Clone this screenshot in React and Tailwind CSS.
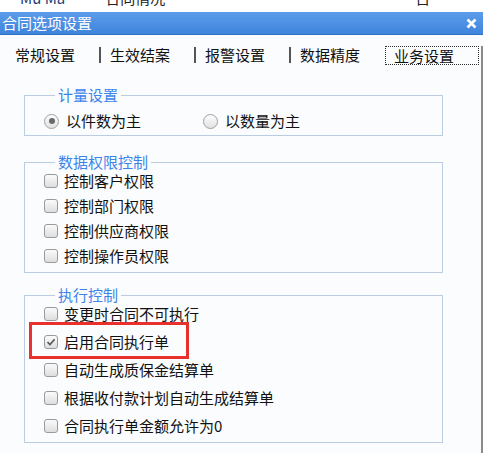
import React from "react";

const font = { fontFamily: '"Noto Sans CJK SC", "Noto Sans", sans-serif' };

function Check({ checked }) {
  return (
    <span className="flex h-[14px] w-[14px] shrink-0 items-center justify-center rounded-[3px] border border-[#9a9a9a] bg-gradient-to-b from-[#fbfbfb] to-[#dedede]">
      {checked && (
        <svg width="10" height="10" viewBox="0 0 10 10">
          <path d="M1.5 5.2 L4 7.6 L8.6 2.2" fill="none" stroke="#555" strokeWidth="1.6" />
        </svg>
      )}
    </span>
  );
}

function Radio({ checked }) {
  return (
    <span className="flex h-[15px] w-[15px] shrink-0 items-center justify-center rounded-full border border-[#a0a0a0] bg-gradient-to-b from-[#fdfdfd] to-[#e2e2e2]">
      {checked && <span className="h-[6px] w-[6px] rounded-full bg-[#6a6a6a]" />}
    </span>
  );
}

function Row({ checked, children, boxed }) {
  return (
    <div className="relative flex h-[20px] items-center gap-[6px]">
      {boxed && (
        <span className="absolute left-[-15px] top-[-10px] h-[37px] w-[160px] border-[3px] border-[#e8302c]" />
      )}
      <Check checked={checked} />
      <span className="whitespace-nowrap text-[15px] leading-[20px] text-[#111]">{children}</span>
    </div>
  );
}

function Group({ title, children, className }) {
  return (
    <fieldset className={`ml-[24px] w-[419px] border border-[#bccde2] pl-[19px] ${className}`}>
      <legend className="ml-[11px] px-[3px] text-[15px] leading-[18px] text-[#3d84ea]">{title}</legend>
      {children}
    </fieldset>
  );
}

const tabs = ["常规设置", "生效结案", "报警设置", "数据精度"];

export default function App() {
  return (
    <div className="h-[453px] w-[483px] overflow-hidden bg-[#fafcfe]" style={font}>
      <div className="h-[12px] overflow-hidden bg-white">
        <div className="mt-[-11px] flex whitespace-nowrap text-[15px] leading-[18px] text-[#1f3d7a]">
          <span className="ml-[20px]">Mu Ma</span>
          <span className="ml-[40px] text-[#222]">合同情况</span>
          <span className="ml-[250px] text-[#222]">日</span>
        </div>
      </div>
      <div className="flex h-[23px] items-center justify-between border-b border-[#2f6fc4] bg-gradient-to-b from-[#5c9cea] to-[#3f84dc] pl-[2px] pr-[6px]">
        <span className="text-[15px] leading-[20px] text-white">合同选项设置</span>
        <svg width="11" height="11" viewBox="0 0 11 11">
          <path d="M1.5 1.5 L9.5 9.5 M9.5 1.5 L1.5 9.5" stroke="white" strokeWidth="2.6" />
        </svg>
      </div>
      <div className="flex">
        <div className="w-[481px]">
          <div className="mt-[10px] flex h-[20px] items-center whitespace-nowrap pl-[15px] text-[15px] text-[#111]">
            {tabs.map((t, i) => (
              <React.Fragment key={t}>
                {i > 0 && <span className="ml-[24px] mr-[9px] h-[16px] w-[2px] shrink-0 bg-[#555]" />}
                <span className="w-[60px] shrink-0 leading-[20px]">{t}</span>
              </React.Fragment>
            ))}
            <span className="ml-[25px] flex h-[19px] w-[94px] shrink-0 items-center border border-dotted border-[#333] pl-[8px] leading-[17px]">
              业务设置
            </span>
          </div>
          <Group title="计量设置" className="mt-[21px] pb-[4px]">
            <div className="mt-[7px] flex h-[20px] items-center whitespace-nowrap">
              <Radio checked />
              <span className="ml-[7px] text-[15px] leading-[20px] text-[#111]">以件数为主</span>
              <span className="ml-[62px]">
                <Radio />
              </span>
              <span className="ml-[7px] text-[15px] leading-[20px] text-[#111]">以数量为主</span>
            </div>
          </Group>
          <Group title="数据权限控制" className="mt-[17px] pb-[6px]">
            <div className="flex flex-col gap-[5px]">
              <Row>控制客户权限</Row>
              <Row>控制部门权限</Row>
              <Row>控制供应商权限</Row>
              <Row>控制操作员权限</Row>
            </div>
          </Group>
          <Group title="执行控制" className="mt-[13px] pb-[6px]">
            <div className="flex flex-col gap-[8px]">
              <Row>变更时合同不可执行</Row>
              <Row checked boxed>启用合同执行单</Row>
              <Row>自动生成质保金结算单</Row>
              <Row>根据收付款计划自动生成结算单</Row>
              <Row>合同执行单金额允许为0</Row>
            </div>
          </Group>
        </div>
        <div className="mt-[11px] h-[420px] w-[2px] bg-[#8a8a8a]" />
      </div>
    </div>
  );
}
